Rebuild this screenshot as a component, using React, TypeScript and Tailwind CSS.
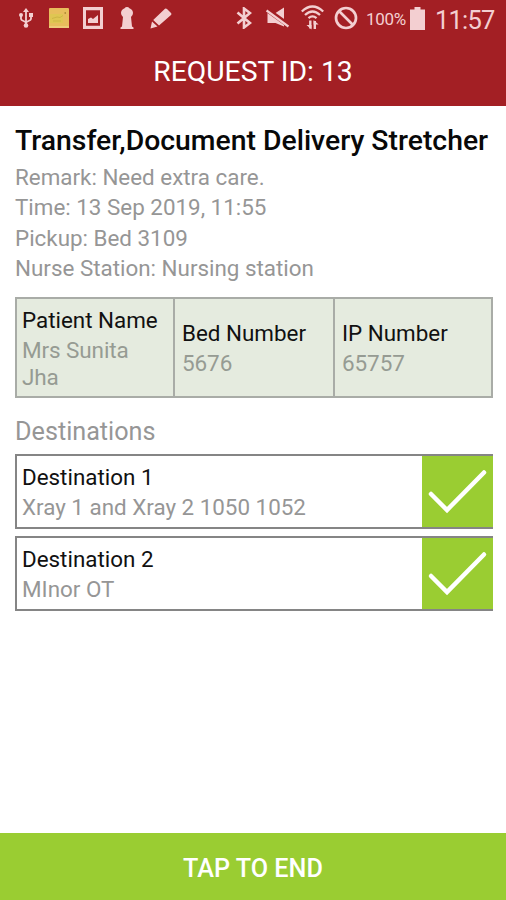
import type { ReactNode } from 'react';

function UsbIcon() {
  return (
    <svg className="ml-[19px] w-[14px]" height="20" viewBox="0 0 14 20" fill="none" stroke="#f3cfd1" strokeWidth="1.8">
      <path d="M7 3v14M2 8v3c0 2 5 2 5 4M12 7v4c0 2-5 2-5 4" />
      <path d="M7 0L10 4H4zM10 5h4v4h-4z" fill="#f3cfd1" stroke="none" />
      <circle cx="2" cy="7" r="2" fill="#f3cfd1" stroke="none" />
      <circle cx="7" cy="17.500" r="2.300" fill="#f3cfd1" stroke="none" />
    </svg>
  );
}

function NoteIcon() {
  return (
    <svg className="ml-[16px] w-[20px]" height="20" viewBox="0 0 20 20">
      <rect width="20" height="20" rx="1" fill="#e8bd5c" />
      <path d="M1 6h13v9H1z" fill="#dfc652" />
      <path d="M3 10.500l5-1.500 3 .5 3-2M4 13h8" stroke="#cdb545" fill="none" />
      <path d="M15.500 4h1.500v2h-1.500z" fill="#b8913a" />
      <path d="M0 18h20v2H0z" fill="#eecb78" />
    </svg>
  );
}

function PictureIcon() {
  return (
    <svg className="ml-[14px] w-[20px]" height="22" viewBox="0 0 20 22">
      <path fillRule="evenodd" d="M0 0h20v22H0zM3 3.300v15.400h14V3.300z" fill="#f3cfd1" />
      <path d="M5 16v-4l3-1.500 2 1.500 5-4v8z" fill="#f3cfd1" />
    </svg>
  );
}

function KeyholeIcon() {
  return (
    <svg className="ml-[17px] w-[14px]" height="24" viewBox="0 0 14 24" fill="#f3cfd1">
      <path d="M5 2Q5 1 7 1T9 2Q13 3.500 13 7Q13 9.500 11 11L12 20.500L13.500 21.500V23H0.500V21.500L2 20.500L3 11Q1 9.500 1 7Q1 3.500 5 2z" />
    </svg>
  );
}

function PencilIcon() {
  return (
    <svg className="ml-[16px] w-[22px]" height="21" viewBox="0 0 22 21" fill="#f3cfd1">
      <path d="M0.500 20.500L2 13.500L7.500 18.500zM3.200 12L15 0.800Q16 0 17 1L21 5Q22 6 21 7L9 17.600z" />
    </svg>
  );
}

function BluetoothIcon() {
  return (
    <svg className="ml-[64px] w-[16px]" height="22" viewBox="0 0 16 22" fill="none" stroke="#f3cfd1" strokeWidth="2.600">
      <path d="M1.500 5.500L14 16L8 20.500V1.500L14 6L1.500 16.500" />
    </svg>
  );
}

function MuteIcon() {
  return (
    <svg className="ml-[14px] w-[23px]" height="22" viewBox="0 0 23 22">
      <path d="M1.500 6H9.500L18 0.500V19.500L9.500 16H1.500z" fill="#f3cfd1" />
      <path d="M0 2L23 18.500" stroke="#a31f24" strokeWidth="5" />
      <path d="M0.500 3.500L22.500 19.500" stroke="#f3cfd1" strokeWidth="2.400" />
    </svg>
  );
}

function WifiIcon() {
  return (
    <svg className="ml-[12px] w-[23px]" height="26" viewBox="0 0 23 26" fill="none" stroke="#f3cfd1" strokeWidth="2.300">
      <path d="M0.800 6.500Q11.500-3.500 22.200 6.500M4 10Q11.500 3 19 10M7.500 13.200Q11.500 9.500 15.500 13.200" />
      <path d="M9.300 15.500v8M13.800 16v8" strokeWidth="2.400" />
      <path d="M5.500 20h5v4.500zM12.600 15v4.500h5z" fill="#f3cfd1" stroke="none" />
    </svg>
  );
}

function BlockIcon() {
  return (
    <svg className="ml-[10px] w-[24px]" height="24" viewBox="0 0 24 24" fill="none" stroke="#f3cfd1" strokeWidth="2.700">
      <circle cx="12" cy="12" r="10" />
      <path d="M5 5l14 14" />
    </svg>
  );
}

function BatteryIcon() {
  return (
    <svg className="ml-[4px] w-[15px]" height="23" viewBox="0 0 15 23" fill="#f3cfd1">
      <path d="M4.500 0h6v2.500H15V23H0V2.500h4.500z" />
    </svg>
  );
}

function StatusBar() {
  return (
    <div className="flex h-9 items-center text-[#f3cfd1] [&>*]:shrink-0">
      <UsbIcon />
      <NoteIcon />
      <PictureIcon />
      <KeyholeIcon />
      <PencilIcon />
      <BluetoothIcon />
      <MuteIcon />
      <WifiIcon />
      <BlockIcon />
      <span className="ml-[8px] mt-[2px] w-[40px] whitespace-nowrap text-[17px] leading-5 tracking-[-0.3px]">100%</span>
      <BatteryIcon />
      <span className="ml-[10px] mt-[3px] whitespace-nowrap text-[25.5px] leading-8 tracking-[-0.8px]">11:57</span>
    </div>
  );
}

function Cell({ label, children }: { label: string; children: ReactNode }) {
  return (
    <div className="flex flex-col justify-center border-r-2 border-[#a9aca7] pl-[7px] pt-px first:pl-[5px] last:border-r-0">
      <div className="text-[22.4px] leading-[30px] text-[#111]">{label}</div>
      <div className="mt-[2px] text-[22.5px] leading-[27px] tracking-[-0.1px] text-[#969b93]">{children}</div>
    </div>
  );
}

function Destination({ name, place }: { name: string; place: string }) {
  return (
    <div className="flex h-[75px] w-[478px] border-y-2 border-l-2 border-[#858585]">
      <div className="flex-1 pl-[5px] pt-[6px] text-[22.4px] leading-[30px]">
        <div className="text-[#111]">{name}</div>
        <div className="text-[#969696]">{place}</div>
      </div>
      <div className="w-[71px] bg-[#9acd32]">
        <svg width="71" height="71" viewBox="0 0 71 71" fill="none" stroke="#fff" strokeWidth="4.500" strokeLinecap="round" strokeLinejoin="miter">
          <path d="M9 38L25 54L62 16.500" />
        </svg>
      </div>
    </div>
  );
}

export default function App() {
  return (
    <div className="flex h-[900px] w-[506px] flex-col overflow-hidden bg-white font-['Roboto',sans-serif]">
      <header className="h-[106px] bg-[#a31f24]">
        <StatusBar />
        <h1 className="pt-[18px] text-center text-[28.3px] leading-9 text-white">REQUEST ID: 13</h1>
      </header>
      <main className="flex-1 pl-[15px]">
        <h2 className="pt-[16px] whitespace-nowrap text-[28.35px] font-medium leading-[38px] text-[#080808]">
          Transfer,Document Delivery Stretcher
        </h2>
        <div className="mt-[2px] text-[22.4px] leading-[30.4px] text-[#969696]">
          <p>Remark: Need extra care.</p>
          <p>Time: 13 Sep 2019, 11:55</p>
          <p>Pickup: Bed 3109</p>
          <p>Nurse Station: Nursing station</p>
        </div>
        <div className="mt-[13px] grid h-[101px] w-[478px] grid-cols-[158px_160px_1fr] border-2 border-[#a9aca7] bg-[#e5ebdf]">
          <Cell label="Patient Name">Mrs Sunita<br />Jha</Cell>
          <Cell label="Bed Number">5676</Cell>
          <Cell label="IP Number">65757</Cell>
        </div>
        <h3 className="mt-[17px] text-[25.2px] leading-[34px] text-[#969696]">Destinations</h3>
        <div className="mt-[5px] flex flex-col gap-[7px]">
          <Destination name="Destination 1" place="Xray 1 and Xray 2 1050 1052" />
          <Destination name="Destination 2" place="MInor OT" />
        </div>
      </main>
      <button className="h-[67px] bg-[#9acd32] pt-[4px] text-[25.2px] font-medium text-white">TAP TO END</button>
    </div>
  );
}
